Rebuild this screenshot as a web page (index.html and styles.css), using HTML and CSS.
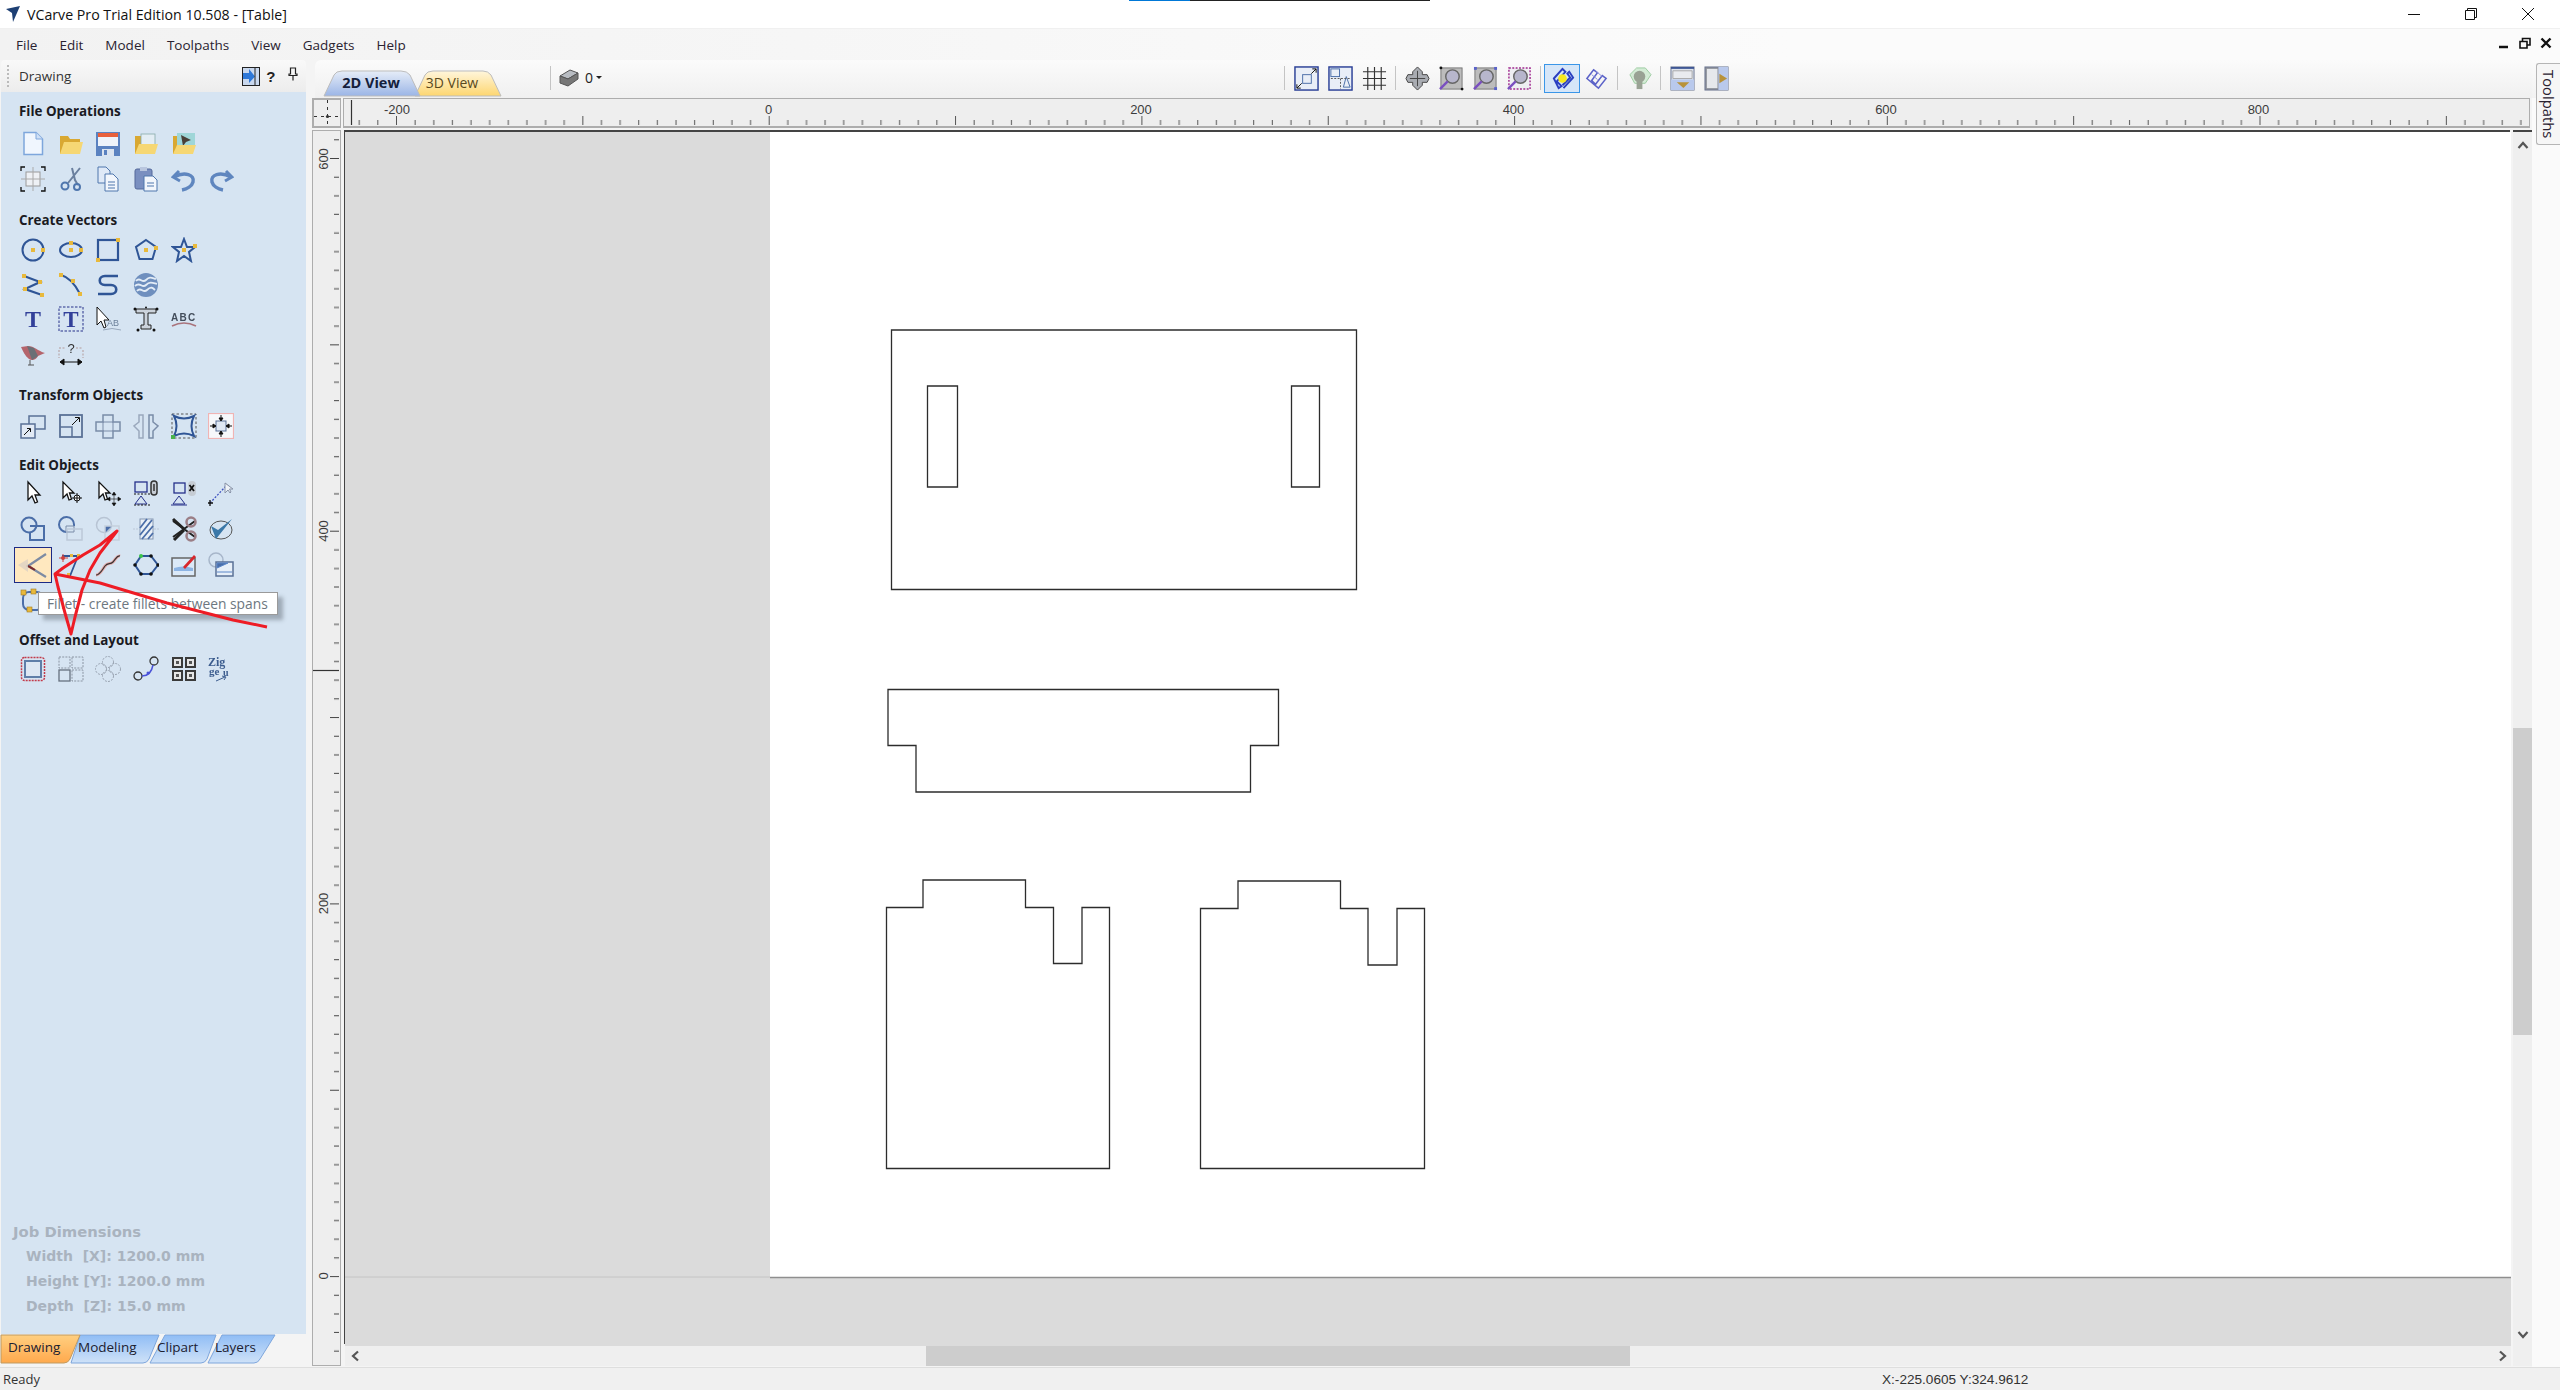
FILE: index.html
```html
<!DOCTYPE html>
<html>
<head>
    <title>VCarve Pro Trial Edition 10.508 - [Table]</title>
    <link rel="stylesheet" href="styles.css">
</head>
<body>
    <div class="capture-bar"><span class="capture-blue"></span><span class="capture-dark"></span></div>

    <div class="titlebar">
        <svg class="app-icon" width="16" height="18" viewBox="0 0 16 18"><path d="M1 4L15 1L8 17L7 8z" fill="#1d3f73"/></svg>
        <span class="title-text">VCarve Pro Trial Edition 10.508 - [Table]</span>
        <div class="win-buttons">
            <svg width="14" height="14" viewBox="0 0 14 14"><path d="M1 7.5H13" stroke="#111" fill="none"/></svg>
            <svg width="14" height="14" viewBox="0 0 14 14"><path d="M1.5 3.5H10.5V12.5H1.5zM3.5 3.5V1.5H12.5V10.5H10.5" stroke="#111" fill="none"/></svg>
            <svg width="14" height="14" viewBox="0 0 14 14"><path d="M1 1L13 13M13 1L1 13" stroke="#111" fill="none"/></svg>
        </div>
    </div>

    <div class="menubar">
        <nav class="menu">
            <span>File</span><span>Edit</span><span>Model</span><span>Toolpaths</span><span>View</span><span>Gadgets</span><span>Help</span>
        </nav>
        <div class="mdi-buttons">
            <svg width="12" height="12" viewBox="0 0 12 12"><path d="M1 10H10" stroke="#111" stroke-width="2.5"/></svg>
            <svg width="12" height="12" viewBox="0 0 12 12"><path d="M1 4.5H8V11H1zM3.5 4V1.5H11V8H8.5" stroke="#111" stroke-width="1.6" fill="none"/></svg>
            <svg width="12" height="12" viewBox="0 0 12 12"><path d="M1.5 1.5L10.5 10.5M10.5 1.5L1.5 10.5" stroke="#111" stroke-width="2.4"/></svg>
        </div>
    </div>

    <div class="workspace">
        <aside class="side">
            <div class="side-header">
                <span class="grip"></span>
                <span class="side-title">Drawing</span>
                <svg class="side-btn" width="18" height="19" viewBox="0 0 18 19"><rect x=".5" y=".5" width="17" height="18" fill="#c9d8ee" stroke="#222"/><path d="M1 6H7V2L13 9.5L7 16V12H1z" fill="#2e78d8"/><path d="M13 1V18" stroke="#222"/></svg>
                <span class="side-help">?</span>
                <svg class="side-pin" width="10" height="14" viewBox="0 0 10 14"><path d="M2.5 1H7.5V7H9V8.5H1V7H2.5zM5 8.5V13.5" stroke="#222" stroke-width="1.2" fill="none"/></svg>
            </div>

            <div class="side-body">
                <section class="group group-file">
                    <h3>File Operations</h3>
                    <div class="tools">
                        <svg viewBox="0 0 26 26"><path d="M4 1.5H16L22.500 8V23.500H4z" fill="#f0f6fe" stroke="#7ea6dc" stroke-width="1.500"/><path d="M16 1.500V8H22.500" fill="#cfe0f6" stroke="#7ea6dc"/></svg>
                        <svg viewBox="0 0 26 26"><path d="M2 23V5H10L12 8H22V23z" fill="#d9a832"/><path d="M2 23L6 11H25L22 23z" fill="#f6d774"/></svg>
                        <svg viewBox="0 0 26 26"><rect x="1" y="1" width="24" height="24" fill="#5b82c0"/><rect x="3" y="2" width="20" height="4" fill="#e8603c"/><rect x="3" y="6" width="20" height="9" fill="#eef3fa"/><rect x="7" y="18" width="12" height="7" fill="#dbe4f0"/><rect x="9" y="19" width="3" height="5" fill="#5b82c0"/></svg>
                        <svg viewBox="0 0 26 26"><path d="M2 23V5H10L12 7H22V23z" fill="#d9a832"/><rect x="8" y="3" width="14" height="11" fill="#e3edf4" stroke="#8aa" stroke-width=".8"/><path d="M2 23L6 13H25L22 23z" fill="#f6d774"/></svg>
                        <svg viewBox="0 0 26 26"><path d="M2 23V5H10L12 7H22V23z" fill="#d9a832"/><rect x="6" y="2" width="18" height="12" fill="#9fd6d8"/><path d="M10 4L20 9L15 11L12 15z" fill="#4a4038"/><path d="M2 23L6 14H25L22 23z" fill="#f6d774"/></svg>
                        <span></span>

                        <svg viewBox="0 0 26 26"><rect x="6" y="6" width="14" height="14" fill="#eef1f5" stroke="#999"/><path d="M13 1V25M1 13H25" stroke="#aaa"/><path d="M1 5V1H5M21 1H25V5M25 21V25H21M5 25H1V21" stroke="#111" fill="none" stroke-width="1.300"/></svg>
                        <svg viewBox="0 0 26 26"><path d="M22 2L10 17M14 2L17 14L20 19" stroke="#6a7f9e" stroke-width="2" fill="none"/><circle cx="7" cy="20" r="3.500" fill="none" stroke="#4f76ad" stroke-width="2"/><circle cx="19" cy="21" r="3" fill="none" stroke="#4f76ad" stroke-width="2"/></svg>
                        <svg viewBox="0 0 26 26"><path d="M3 1H11L15 5V17H3z" fill="#dfe9f7" stroke="#4f76ad"/><path d="M10 8H18L23 13V25H10z" fill="#f2f6fc" stroke="#4f76ad"/><path d="M13 16H20M13 19H20M13 22H20" stroke="#4f76ad"/></svg>
                        <svg viewBox="0 0 26 26"><rect x="2" y="3" width="17" height="20" rx="2" fill="#7a8fc0" stroke="#55689a"/><rect x="7" y="1" width="7" height="4" fill="#b9c6de"/><path d="M11 10H20L24 14V25H11z" fill="#f2f6fc" stroke="#4f76ad"/><path d="M14 17H21M14 20H21" stroke="#4f76ad"/></svg>
                        <svg viewBox="0 0 26 26"><path d="M8 5L2 11L9 15" fill="none" stroke="#5f86bf" stroke-width="3"/><path d="M3 11C14 5 24 9 22 16C21 20 16 23 11 24" fill="none" stroke="#5f86bf" stroke-width="3.500"/></svg>
                        <svg viewBox="0 0 26 26"><path d="M18 5L24 11L17 15" fill="none" stroke="#5f86bf" stroke-width="3"/><path d="M23 11C12 5 2 9 4 16C5 20 10 23 15 24" fill="none" stroke="#5f86bf" stroke-width="3.500"/></svg>
                    </div>
                </section>

                <section class="group group-vectors">
                    <h3>Create Vectors</h3>
                    <div class="tools tight">
                        <svg viewBox="0 0 26 26"><circle cx="13" cy="13" r="10.500" fill="none" stroke="#2f5596" stroke-width="2"/><rect x="11" y="11" width="4" height="4" fill="#e8b93c"/><rect x="21" y="11" width="4" height="4" fill="#e8b93c"/></svg>
                        <svg viewBox="0 0 26 26"><ellipse cx="13" cy="13" rx="11" ry="7" fill="none" stroke="#2f5596" stroke-width="2"/><rect x="11" y="4" width="4" height="4" fill="#e8b93c"/><rect x="11" y="11" width="4" height="4" fill="#e8b93c"/><rect x="21" y="11" width="4" height="4" fill="#e8b93c"/></svg>
                        <svg viewBox="0 0 26 26"><rect x="3" y="3" width="20" height="20" fill="none" stroke="#2f5596" stroke-width="2.200"/><rect x="21" y="1" width="4" height="4" fill="#e8b93c"/><rect x="1" y="21" width="4" height="4" fill="#e8b93c"/></svg>
                        <svg viewBox="0 0 26 26"><path d="M13 3L23 10L19.500 22H6.500L3 10z" fill="none" stroke="#2f5596" stroke-width="2"/><rect x="11" y="11" width="4" height="4" fill="#e8b93c"/><rect x="21" y="9" width="4" height="4" fill="#e8b93c"/></svg>
                        <svg viewBox="0 0 26 26"><path d="M13 2L16 10H24L18 15L20 24L13 19L6 24L8 15L2 10H10z" fill="none" stroke="#2f5596" stroke-width="2"/><rect x="11" y="11" width="4" height="4" fill="#e8b93c"/><rect x="22" y="7" width="4" height="4" fill="#e8b93c"/></svg>
                        <span></span>

                        <svg viewBox="0 0 26 26"><path d="M4 4L20 10L5 17L22 23" fill="none" stroke="#2f5596" stroke-width="2.200"/><rect x="2" y="2" width="4" height="4" fill="#e8b93c"/><rect x="18" y="8" width="4" height="4" fill="#e8b93c"/><rect x="3" y="15" width="4" height="4" fill="#e8b93c"/><rect x="20" y="21" width="4" height="4" fill="#e8b93c"/></svg>
                        <svg viewBox="0 0 26 26"><path d="M3 3Q14 6 22 22" fill="none" stroke="#2f5596" stroke-width="2"/><rect x="1" y="1" width="4" height="4" fill="#e8b93c"/><rect x="13" y="7" width="4" height="4" fill="#e8b93c"/><rect x="20" y="20" width="4" height="4" fill="#e8b93c"/></svg>
                        <svg viewBox="0 0 26 26"><path d="M23 4H10C3 4 3 13 10 13H16C23 13 23 22 16 22H3" fill="none" stroke="#2f5596" stroke-width="2.600"/></svg>
                        <svg viewBox="0 0 26 26"><circle cx="13" cy="13" r="12" fill="#6f8fbe"/><path d="M3 9C7 4 9 12 13 8S19 6 23 7M2 14C7 9 9 17 13 13S20 11 24 12M4 19C8 14 10 22 14 18S20 16 22 18" fill="none" stroke="#e3ecf6" stroke-width="1.800"/></svg>
                        <span></span>
                        <span></span>

                        <svg viewBox="0 0 26 26"><text x="13" y="21" class="ic-serif" fill="#32409a" font-size="24" text-anchor="middle">T</text></svg>
                        <svg viewBox="0 0 26 26"><rect x="1" y="1" width="24" height="24" fill="none" stroke="#26308a" stroke-dasharray="2.500 1.500"/><text x="13" y="21" class="ic-serif" fill="#32409a" font-size="23" text-anchor="middle">T</text></svg>
                        <svg viewBox="0 0 26 26"><path d="M2 1V19L6 15L9 22L11 21L9 14H14z" fill="#fff" stroke="#111"/><text x="12" y="20" class="ic-small" fill="#6b7f99" font-size="9">AB</text><path d="M8 24Q17 21 26 24" stroke="#98a8bd" fill="none"/></svg>
                        <svg viewBox="0 0 26 26"><path d="M3 3H23V7H15V19H18V23H8V19H11V7H3z" fill="#ccd3dc" stroke="#222"/><g fill="#111"><circle cx="2" cy="3" r="1.500"/><circle cx="24" cy="3" r="1.500"/><circle cx="5" cy="24" r="1.500"/><circle cx="21" cy="24" r="1.500"/><circle cx="13" cy="1.500" r="1"/></g></svg>
                        <svg viewBox="0 0 26 26"><text x="0" y="15" class="ic-small" fill="#444e5c" font-size="10" font-weight="bold" letter-spacing="1.300">ABC</text><path d="M1 20Q13 14 25 20" stroke="#a9737c" stroke-width="1.500" fill="none"/></svg>
                        <span></span>

                        <svg viewBox="0 0 26 26"><path d="M1 6L8 5C14 5 18 10 25 12L18 15C16 19 12 20 9 18C5 15 3 10 1 6z" fill="#b4646c"/><path d="M7 5L14 7L18 15L12 19z" fill="#6b6f76"/><path d="M10 19V24M8 24H14" stroke="#555"/></svg>
                        <svg viewBox="0 0 26 26"><text x="13" y="12" class="ic-small" fill="#333" font-size="13" text-anchor="middle">?</text><path d="M1 9V17M25 9V17M1 7H8M18 7H25" stroke="#b39a9a" stroke-dasharray="2 1.500" fill="none"/><path d="M2 21H24M2 21L6 18V24zM24 21L20 18V24z" stroke="#111" fill="#111"/></svg>
                    </div>
                </section>

                <section class="group group-transform">
                    <h3>Transform Objects</h3>
                    <div class="tools">
                        <svg viewBox="0 0 26 26"><path d="M9 3H25V16H9z" fill="none" stroke="#5a7096" stroke-width="1.500"/><rect x="1" y="11" width="14" height="14" fill="#e2eaf5" stroke="#5a7096" stroke-width="1.500"/><path d="M4 22L10 16M7 15.500H10.500V19" stroke="#111" fill="none"/></svg>
                        <svg viewBox="0 0 26 26"><rect x="2" y="2" width="22" height="22" fill="none" stroke="#5a7096" stroke-width="1.800"/><path d="M2 14H14V24" stroke="#5a7096" fill="none" stroke-width="1.500"/><path d="M14 12L21 5M17 4.500H21.500V9" stroke="#111" fill="none"/></svg>
                        <svg viewBox="0 0 26 26"><path d="M8 2H18V9H25V18H18V25H8V18H1V9H8z" fill="none" stroke="#7a8ca8" stroke-width="1.500"/><path d="M8 9H18V18H8z" fill="none" stroke="#7a8ca8"/></svg>
                        <svg viewBox="0 0 26 26"><path d="M10 2H6V9L1 13L6 18V25H10z" fill="none" stroke="#9aa8bd" stroke-width="1.500"/><path d="M16 2H20V9L25 13L20 18V25H16z" fill="none" stroke="#7a8ca8" stroke-width="1.500"/></svg>
                        <svg viewBox="0 0 26 26"><rect x="1" y="1" width="24" height="24" fill="none" stroke="#555" stroke-dasharray="2.500 2"/><path d="M3 3Q13 8 23 3Q18 13 23 23Q13 18 3 23Q8 13 3 3z" fill="none" stroke="#2f5596" stroke-width="2"/><rect x="0" y="22" width="4" height="4" fill="#49b24a"/></svg>
                        <svg viewBox="0 0 26 26"><rect x=".5" y=".5" width="25" height="25" fill="#f6f8fb" stroke="#f0b4b4" stroke-width="1.200"/><rect x="8" y="8" width="10" height="10" fill="#dfe8f4" stroke="#5a7096"/><path d="M13 2V7M13 24V19M2 13H7M24 13H19M11 5L13 8L15 5zM11 21L13 18L15 21zM5 11L8 13L5 15zM21 11L18 13L21 15z" stroke="#111" fill="#111"/></svg>
                    </div>
                </section>

                <section class="group group-edit">
                    <h3>Edit Objects</h3>
                    <div class="tools wide">
                        <svg viewBox="0 0 26 26"><path d="M8 2V20L12 16L15 23L17.500 22L15 15H20z" fill="#fff" stroke="#111" stroke-width="1.300"/></svg>
                        <svg viewBox="0 0 26 26"><path d="M5 2V18L9 14L11 20L13.500 19L11.500 13H16z" fill="#fff" stroke="#111" stroke-width="1.300"/><circle cx="19" cy="18" r="3" fill="#fff" stroke="#111"/><path d="M19 13V23M14 18H24" stroke="#111"/></svg>
                        <svg viewBox="0 0 26 26"><path d="M4 2V18L8 14L10 20L12.500 19L10.500 13H15z" fill="#fff" stroke="#111" stroke-width="1.300"/><path d="M19 13V25M13 19H25M17 15L19 12L21 15zM17 23L19 26L21 23zM15 17L12 19L15 21zM23 17L26 19L23 21z" stroke="#111" fill="#111" stroke-width=".6"/></svg>
                        <svg viewBox="0 0 26 26"><rect x="2" y="2" width="12" height="10" fill="none" stroke="#26308a" stroke-width="1.300"/><path d="M2 24L8 16L14 24z" fill="none" stroke="#26308a"/><path d="M1 14H17M1 25H17" stroke="#111" stroke-dasharray="2 1.500"/><rect x="18" y="1" width="6" height="14" rx="3" fill="#c6ccd4" stroke="#333" stroke-width="1.500"/><path d="M21 4V11" stroke="#333" stroke-width="1.500"/></svg>
                        <svg viewBox="0 0 26 26"><rect x="3" y="3" width="11" height="10" fill="none" stroke="#26308a" stroke-width="1.300"/><path d="M2 24L8 16L14 24zM0 25H16" fill="none" stroke="#26308a"/><rect x="17" y="1" width="8" height="15" rx="4" fill="#c6ccd4"/><path d="M18.500 5L23 11M23 5L18.500 11" stroke="#111" stroke-width="1.800"/></svg>
                        <svg viewBox="0 0 26 26"><path d="M2 23L18 6" stroke="#3f52c0" stroke-dasharray="2 1.500" stroke-width="1.300"/><path d="M2 20V26M0 23H5" stroke="#111" stroke-width="1.300"/><path d="M17 3L24 9" stroke="#888"/><path d="M17 3V13L20 10L22 13L23 12L21.500 9H25z" fill="#eef2f8" stroke="#8893a8"/></svg>

                        <svg viewBox="0 0 26 26"><circle cx="9" cy="9" r="7.500" fill="none" stroke="#4b6ea8" stroke-width="2"/><path d="M10 10H24V24H10V16" fill="none" stroke="#4b6ea8" stroke-width="2"/></svg>
                        <svg viewBox="0 0 26 26"><path d="M10 16H9A7.500 7.500 0 1 1 16 9V10" fill="none" stroke="#4b6ea8" stroke-width="2"/><path d="M8 10H16V16H8z" fill="none" stroke="#7a8ca8"/><rect x="9" y="13" width="15" height="11" fill="none" stroke="#bcc8d8" stroke-width="1.500"/></svg>
                        <svg viewBox="0 0 26 26"><circle cx="9" cy="9" r="7.500" fill="none" stroke="#b8c4d4" stroke-width="1.500"/><path d="M10 10H17L10 17z" fill="#4b6ea8"/><rect x="10" y="10" width="14" height="14" fill="none" stroke="#c5d0dd" stroke-width="1.500"/></svg>
                        <svg viewBox="0 0 26 26"><rect x="7" y="3" width="13" height="20" fill="#eaf0f7" stroke="#8597b2"/><path d="M7 12L14 3M7 19L19 4M9 23L20 10M15 23L20 17" stroke="#4b6ea8" stroke-width="1.800"/><path d="M0 13H6M21 13H26" stroke="#bcc8d8" stroke-dasharray="2 1"/></svg>
                        <svg viewBox="0 0 26 26"><path d="M2 5L24 21M24 5L2 21" stroke="#222" stroke-width="2"/><path d="M2 3L13 13M3 24L13 14" stroke="#222" stroke-width="3"/><circle cx="20" cy="6" r="4.500" fill="none" stroke="#9b7e86" stroke-width="2.500"/><circle cx="20" cy="20" r="4.500" fill="none" stroke="#9b7e86" stroke-width="2.500"/></svg>
                        <svg viewBox="0 0 26 26"><ellipse cx="13" cy="14" rx="11" ry="9" fill="none" stroke="#555"/><path d="M3 10L8 23L24 3L10 14z" fill="#3b78a8"/></svg>

                        <svg class="tool-active" viewBox="0 0 36 34"><path d="M31 6L13 18L31 29" fill="none" stroke="#7d8ba3" stroke-width="2.200"/><path d="M13 18Q15 19 20 22" fill="none" stroke="#7d2a2a" stroke-width="2"/><path d="M3 17L13 11V24z" fill="#d8cfc4" opacity=".7"/></svg>
                        <svg viewBox="0 0 26 26"><path d="M4 4H20L12 24" fill="none" stroke="#2f5596" stroke-width="1.800"/><path d="M1 6H10M5 2V10" stroke="#d0403c"/><circle cx="5" cy="6" r="2" fill="#d0403c"/><rect x="12" y="2" width="3" height="3" fill="#e8b93c"/><rect x="19" y="2" width="3" height="3" fill="#e8b93c"/><rect x="9" y="21" width="3" height="3" fill="#e8b93c"/></svg>
                        <svg viewBox="0 0 26 26"><path d="M1 23C5 23 7 18 10 14S15 13 18 10S22 3 25 4" fill="none" stroke="#e7a8a8" stroke-width="3"/><path d="M1 23C5 23 7 18 10 14S15 13 18 10S22 3 25 4" fill="none" stroke="#333" stroke-width="1.200"/></svg>
                        <svg viewBox="0 0 26 26"><path d="M2 13L8 4H18L25 13L18 22H8z" fill="none" stroke="#2f5596" stroke-width="2"/><g fill="#111"><circle cx="18" cy="4" r="1.800"/><circle cx="25" cy="13" r="1.800"/><circle cx="18" cy="22" r="1.800"/><circle cx="8" cy="22" r="1.800"/><circle cx="2" cy="13" r="1.800"/></g><circle cx="8" cy="4" r="2" fill="#3ac44a"/></svg>
                        <svg viewBox="0 0 26 26"><rect x="1" y="6" width="23" height="18" fill="#dbe9f8" stroke="#666" stroke-width="1.500"/><path d="M3 16Q12 13 22 16V19H3z" fill="#8db4e4"/><path d="M12 15L23 3L25 5L14 17z" fill="#d8262c"/></svg>
                        <svg viewBox="0 0 26 26"><circle cx="8" cy="8" r="7" fill="none" stroke="#a7b6ca" stroke-width="1.500"/><rect x="8" y="10" width="17" height="14" fill="#e7eff8" stroke="#5a7096" stroke-width="1.500"/><path d="M9 11H20L9 16zM9 20H24" stroke="#5a86c8" fill="#4b6ea8"/></svg>

                        <svg viewBox="0 0 26 26"><rect x="3" y="4" width="20" height="18" rx="6" fill="none" stroke="#4b6ea8" stroke-width="2"/><rect x="1" y="2" width="5" height="5" fill="#e8b93c" stroke="#a07a20" stroke-width=".6"/><rect x="11" y="1" width="5" height="5" fill="#e8b93c" stroke="#a07a20" stroke-width=".6"/><rect x="7" y="19" width="5" height="5" fill="#e8b93c" stroke="#a07a20" stroke-width=".6"/></svg>
                        <svg viewBox="0 0 26 26"><path d="M4 6L22 12" stroke="#8a97a8"/></svg>
                        <svg viewBox="0 0 26 26"><path d="M4 6L22 12" stroke="#8a97a8"/></svg>
                        <svg viewBox="0 0 26 26"><path d="M4 6L22 12" stroke="#8a97a8"/></svg>
                    </div>
                </section>

                <section class="group group-offset">
                    <h3>Offset and Layout</h3>
                    <div class="tools">
                        <svg viewBox="0 0 26 26"><rect x="1.500" y="1.500" width="23" height="23" rx="3" fill="none" stroke="#c23a4a" stroke-width="1.500" stroke-dasharray="2 1"/><rect x="5" y="5" width="16" height="16" fill="#dde7f3" stroke="#5f7ea8" stroke-width="2"/></svg>
                        <svg viewBox="0 0 26 26"><g fill="none" stroke="#8a94a2" stroke-dasharray="2 1.200"><rect x="1" y="1" width="11" height="11"/><rect x="14" y="1" width="11" height="11"/><rect x="14" y="14" width="11" height="11"/></g><rect x="1" y="14" width="11" height="11" fill="none" stroke="#66707e" stroke-width="1.300"/></svg>
                        <svg viewBox="0 0 26 26"><g fill="none" stroke="#98a2b0" stroke-dasharray="2 1.200"><circle cx="13" cy="6" r="5.500"/><circle cx="6" cy="13" r="5.500"/><circle cx="20" cy="13" r="5.500"/><circle cx="13" cy="20" r="5.500"/></g></svg>
                        <svg viewBox="0 0 26 26"><circle cx="5" cy="20" r="4" fill="none" stroke="#333" stroke-width="1.300"/><circle cx="21" cy="5" r="4" fill="none" stroke="#333" stroke-width="1.300"/><path d="M9 20Q18 20 20 9" fill="none" stroke="#4a52d8" stroke-width="1.500"/><circle cx="15" cy="17" r="1.500" fill="#4a52d8"/></svg>
                        <svg viewBox="0 0 26 26"><g fill="#3a3a3a"><rect x="1" y="1" width="11" height="11"/><rect x="14" y="1" width="11" height="11"/><rect x="1" y="14" width="11" height="11"/><rect x="14" y="14" width="11" height="11"/></g><g fill="#e6e6e6"><rect x="3" y="3" width="7" height="7"/><rect x="16" y="3" width="7" height="7"/><rect x="3" y="16" width="7" height="7"/><rect x="16" y="16" width="7" height="7"/></g><g fill="#555"><rect x="5" y="5" width="3" height="3"/><rect x="18" y="5" width="3" height="3"/><rect x="5" y="18" width="3" height="3"/><rect x="18" y="18" width="3" height="3"/></g></svg>
                        <svg viewBox="0 0 26 26"><text x="0" y="10" class="ic-serif" fill="#3c5c8e" font-size="12">Zig</text><text x="1" y="19" class="ic-serif" fill="#3c5c8e" font-size="11">ge</text><text x="15" y="20" class="ic-serif" fill="#3c5c8e" font-size="10">u</text><path d="M8 25L17 21M14 20L18 21L16 24" stroke="#3c5c8e" fill="none"/></svg>
                    </div>
                </section>

                <div class="job-info">
                    <div class="job-title">Job Dimensions</div>
                    <div class="job-line">Width  [X]: 1200.0 mm</div>
                    <div class="job-line">Height [Y]: 1200.0 mm</div>
                    <div class="job-line">Depth  [Z]: 15.0 mm</div>
                </div>
            </div>

            <svg class="side-tabs" width="290" height="33" viewBox="0 0 290 33">
                <defs>
                    <linearGradient id="tabOrange" x1="0" y1="0" x2="0" y2="1"><stop offset="0" stop-color="#ffcf80"/><stop offset="1" stop-color="#ffa94d"/></linearGradient>
                    <linearGradient id="tabBlue" x1="0" y1="0" x2="0" y2="1"><stop offset="0" stop-color="#90bdf5"/><stop offset="1" stop-color="#cfe2f8"/></linearGradient>
                </defs>
                <path d="M208 29H254Q258 29 260 25L275 1H222z" fill="url(#tabBlue)" stroke="#7ea6dc"/>
                <path d="M150 29H201Q205 29 207 25L216 1H165z" fill="url(#tabBlue)" stroke="#7ea6dc"/>
                <path d="M71 29H143Q147 29 149 25L159 1H80z" fill="url(#tabBlue)" stroke="#7ea6dc"/>
                <path d="M1 29H64Q68 29 70 25L80 1H1z" fill="url(#tabOrange)" stroke="#c09a60"/>
                <g class="side-tab-text">
                    <text x="8" y="18">Drawing</text>
                    <text x="78" y="18">Modeling</text>
                    <text x="157" y="18">Clipart</text>
                    <text x="215" y="18">Layers</text>
                </g>
            </svg>

            <!-- tooltip and the red scribble lie over the tool icons -->
            <div class="tooltip">Fillet - create fillets between spans</div>
            <svg class="scribble" width="290" height="120" viewBox="0 525 290 120">
                <path d="M267 627L233 620L167 603L100 583L55 574L63 568L83 555L100 545L117 531L100 553L90 570L82 590L75 617L71 634L65 613L58 587L55 574" fill="none" stroke="#ee1c25" stroke-width="3" stroke-linejoin="round"/>
            </svg>
        </aside>

        <main class="main">
            <div class="toolbar">
                <svg class="view-tabs" width="180" height="27" viewBox="0 0 180 27">
                    <defs>
                        <linearGradient id="tab3d" x1="0" y1="0" x2="0" y2="1"><stop offset="0" stop-color="#fff6dc"/><stop offset="1" stop-color="#fdd670"/></linearGradient>
                        <linearGradient id="tab2d" x1="0" y1="0" x2="0" y2="1"><stop offset="0" stop-color="#e6edf8"/><stop offset="1" stop-color="#9bb5e6"/></linearGradient>
                    </defs>
                    <path d="M92 26L102 5Q104 1 110 1H160Q165 1 168 5L178 26z" fill="url(#tab3d)" stroke="#bdbdbd"/>
                    <path d="M1 26L11 5Q13 1 19 1H78Q84 1 87 5L97 26z" fill="url(#tab2d)" stroke="#bdbdbd"/>
                    <text x="48" y="18" class="tab-label-on" text-anchor="middle">2D View</text>
                    <text x="129" y="18" class="tab-label-off" text-anchor="middle">3D View</text>
                </svg>
                <span class="tb-sep sep-layer"></span>
                <svg class="layer-icon" width="20" height="18" viewBox="0 0 20 18"><path d="M1 7L11 1L19 4L9 10z" fill="#b8bcc2" stroke="#555"/><path d="M1 7V14L9 17L19 10V4L9 10z" fill="#777" stroke="#555"/></svg>
                <span class="layer-num">0</span>
                <span class="caret"></span>

                <div class="view-tools">
                    <span class="tb-sep"></span>
                    <svg viewBox="0 0 26 26"><rect x="1" y="1" width="24" height="24" fill="#e9eef7" stroke="#2a3f96" stroke-width="1.500"/><rect x="9" y="9" width="9" height="9" fill="none" stroke="#4b6ea8"/><path d="M3 23L8 18M18 8L23 3M3 19V23H7M19 3H23V7" stroke="#111" fill="none"/></svg>
                    <svg viewBox="0 0 26 26"><rect x="1" y="1" width="24" height="24" fill="#e9eef7" stroke="#2a3f96" stroke-width="1.500"/><rect x="3" y="3" width="9" height="8" fill="none" stroke="#4b6ea8"/><path d="M16 22L19 11L23 22z" fill="none" stroke="#4b6ea8"/><path d="M3 13H23M13 13V24" stroke="#555" stroke-dasharray="2 1.500"/></svg>
                    <svg viewBox="0 0 26 26"><path d="M1 6H25M1 13H25M1 20H25M6 1V25M13 1V25M20 1V25" stroke="#333" stroke-width="1.200"/></svg>
                    <span class="tb-sep"></span>
                    <svg viewBox="0 0 26 26"><path d="M13 1L18 6V9H23L25 13L23 17H18V20L13 25L8 20V17H3L1 13L3 9H8V6z" fill="#a9acb2" stroke="#444"/><path d="M13 5V21M5 13H21" stroke="#444"/></svg>
                    <svg viewBox="0 0 26 26"><rect x="2" y="2" width="22" height="22" fill="#bcbcbc" stroke="#777"/><circle cx="14" cy="11" r="7" fill="#b7b6cc" stroke="#666" stroke-width="1.500"/><path d="M9 16L1 24" stroke="#7a4fc0" stroke-width="2.500"/><circle cx="2" cy="2" r="1.500" fill="#111"/><circle cx="24" cy="24" r="1.500" fill="#111"/></svg>
                    <svg viewBox="0 0 26 26"><rect x="2" y="2" width="22" height="22" fill="#bcbcbc" stroke="#777"/><circle cx="14" cy="11" r="7" fill="#b7b6cc" stroke="#666" stroke-width="1.500"/><path d="M9 16L1 24" stroke="#7a4fc0" stroke-width="2.500"/><g fill="#5a62c8"><rect x="1" y="1" width="3" height="3"/><rect x="22" y="1" width="3" height="3"/><rect x="22" y="22" width="3" height="3"/></g></svg>
                    <svg viewBox="0 0 26 26"><rect x="2" y="2" width="22" height="22" fill="#eeeef2" stroke="#a02a90" stroke-width="1.500" stroke-dasharray="2 1.500"/><circle cx="14" cy="11" r="7" fill="#b7b6cc" stroke="#666" stroke-width="1.500"/><path d="M9 16L1 24" stroke="#7a4fc0" stroke-width="2.500"/></svg>
                    <span class="tb-sep"></span>
                    <span class="tb-on"><svg viewBox="0 0 26 26"><path d="M4 13L13 3L16 6L7 16L12 21L9 23z" fill="none" stroke="#2a3fc0" stroke-width="2"/><path d="M14 23L24 12L20 6L18 8L21 12L13 20" fill="none" stroke="#2a3fc0" stroke-width="2"/><circle cx="13" cy="13" r="4.500" fill="#f6e820"/></svg></span>
                    <svg viewBox="0 0 26 26"><path d="M3 13L10 4L14 7L8 15L12 19L19 10L23 13L15 23L3 13z" fill="none" stroke="#5b62c8" stroke-width="1.600"/><path d="M8 9L14 14M12 5L19 11" stroke="#8d92dc"/></svg>
                    <span class="tb-sep"></span>
                    <svg viewBox="0 0 26 26"><path d="M3 9L10 2H19L25 9L19 18H8z" fill="#d4ecd6" stroke="#9ccba0"/><circle cx="13" cy="11" r="6" fill="#99a294"/><rect x="10" y="15" width="6" height="9" fill="#99a294"/></svg>
                    <span class="tb-sep"></span>
                    <svg viewBox="0 0 26 26"><rect x="1" y="1" width="24" height="24" fill="#dde3ec" stroke="#6a7590"/><rect x="1" y="1" width="24" height="2" fill="#3f5794"/><path d="M3 5H23V13H3z" fill="#e9ebef" stroke="#aaa"/><rect x="1" y="14" width="24" height="11" fill="#b9c9ec"/><path d="M7 17H20L14 23z" fill="#b8923a"/></svg>
                    <svg viewBox="0 0 26 26"><rect x="1" y="1" width="24" height="24" fill="#8e919a" stroke="#6a7590"/><rect x="3" y="3" width="11" height="20" fill="#e6e8ec"/><rect x="15" y="1" width="10" height="24" fill="#b9c9ec"/><path d="M24 13L16 8V18z" fill="#b8923a"/></svg>
                </div>
            </div>

            <div class="view-grid">
                <div class="ruler-corner">
                    <svg width="28" height="27" viewBox="0 0 28 27"><path d="M13.500 0V27M0 16.500H28" stroke="#333" stroke-dasharray="3 4"/><circle cx="13.500" cy="16.500" r="1.600" fill="#333"/></svg>
                </div>
                <div class="ruler-h">
                    <svg width="2187" height="27" viewBox="343 99 2187 27">
                        <defs>
                            <pattern id="tickH" x="767.7" y="99" width="186.35" height="27" patternUnits="userSpaceOnUse">
                                <path d="M.5 17V26" stroke="#555"/>
                                <path d="M19.1 21V26M37.8 21V26M56.400 21V26M75 21V26M93.700 21V26M112.300 21V26M130.900 21V26M149.600 21V26M168.200 21V26" stroke="#555"/>
                            </pattern>
                        </defs>
                        <rect x="354" y="99" width="2170" height="27" fill="url(#tickH)"/>
                        <path d="M350.500 100V125" stroke="#333" stroke-width="1.200"/>
                        <g class="ruler-label" text-anchor="middle">
                            <text x="396" y="114">-200</text>
                            <text x="767.500" y="114">0</text>
                            <text x="1140" y="114">200</text>
                            <text x="1512.500" y="114">400</text>
                            <text x="1885" y="114">600</text>
                            <text x="2257.500" y="114">800</text>
                        </g>
                    </svg>
                </div>
                <div class="ruler-v">
                    <svg width="27" height="1233" viewBox="313 131 27 1233">
                        <defs>
                            <pattern id="tickV" x="313" y="158" width="27" height="186.35" patternUnits="userSpaceOnUse">
                                <path d="M17 .5H26" stroke="#444"/>
                                <path d="M21 19.100H26M21 37.800H26M21 56.400H26M21 75H26M21 93.700H26M21 112.300H26M21 130.900H26M21 149.600H26M21 168.200H26" stroke="#444"/>
                            </pattern>
                        </defs>
                        <rect x="313" y="132" width="27" height="1230" fill="url(#tickV)"/>
                        <path d="M313 670.500H339" stroke="#333" stroke-width="1.200"/>
                        <g class="ruler-label" text-anchor="middle">
                            <text transform="translate(328 159) rotate(-90)">600</text>
                            <text transform="translate(328 531) rotate(-90)">400</text>
                            <text transform="translate(328 903.500) rotate(-90)">200</text>
                            <text transform="translate(328 1276) rotate(-90)">0</text>
                        </g>
                    </svg>
                </div>
                <div class="canvas-wrap">
                    <svg class="canvas" width="2166" height="1214" viewBox="345 132 2166 1214">
                        <rect x="345" y="132" width="425" height="1214" fill="#dbdbdb"/>
                        <rect x="770" y="1278" width="1741" height="68" fill="#dbdbdb"/>
                        <path d="M770 1277.500H2511" stroke="#8f8f8f" stroke-width="1.500"/>
                        <path d="M345 1277H770" stroke="#c4c4c4"/>
                        <g fill="none" stroke="#2c2c2c" stroke-width="1.300">
                            <path d="M891.500 330H1356.500V589.500H891.500z"/>
                            <path d="M927.500 386H957.500V487H927.500z"/>
                            <path d="M1291.500 386H1319.500V487H1291.500z"/>
                            <path d="M888 689.500H1278.500V745.500H1250.500V792H916V745.500H888z"/>
                            <path d="M886.500 907.500H923V880H1025.500V907.500H1053.500V963.500H1082V907.500H1109.500V1168.500H886.500z"/>
                            <path d="M1200.500 908.500H1238V881H1340.500V908.500H1368V965H1397V908.500H1424.500V1168.500H1200.500z"/>
                        </g>
                    </svg>
                    <div class="vscroll">
                        <svg width="12" height="10" viewBox="0 0 12 10"><path d="M1.500 8L6 3L10.500 8" fill="none" stroke="#555" stroke-width="2.200"/></svg>
                        <div class="vthumb"></div>
                        <svg class="arrow-end" width="12" height="10" viewBox="0 0 12 10"><path d="M1.500 2L6 7L10.500 2" fill="none" stroke="#555" stroke-width="2.200"/></svg>
                    </div>
                    <div class="hscroll">
                        <svg width="10" height="12" viewBox="0 0 10 12"><path d="M8 1.500L3 6L8 10.500" fill="none" stroke="#555" stroke-width="2.200"/></svg>
                        <div class="hthumb"></div>
                        <svg class="arrow-end" width="10" height="12" viewBox="0 0 10 12"><path d="M2 1.500L7 6L2 10.500" fill="none" stroke="#555" stroke-width="2.200"/></svg>
                    </div>
                </div>
            </div>
        </main>

        <div class="right-strip">
            <div class="toolpaths-tab">Toolpaths</div>
        </div>
    </div>

    <div class="statusbar">
        <span>Ready</span>
        <span class="coords">X:-225.0605 Y:324.9612</span>
    </div>
</body>
</html>
```

FILE: styles.css
```css
* {
    box-sizing: border-box;
}

body {
    margin: 0;
    width: 2560px;
    height: 1390px;
    overflow: hidden;
    display: flex;
    flex-direction: column;
    position: relative;
    background-color: #f4f4f4;
    font-family: "Open Sans", "Noto Sans", sans-serif;
    color: #222;
}

svg {
    display: block;
    flex: none;
}

/* top strip of the screen capture */
.capture-bar {
    position: absolute;
    top: 0;
    left: 1129px;
    display: flex;
    height: 1px;
}

.capture-blue {
    width: 61px;
    background-color: #0078d7;
}

.capture-dark {
    width: 240px;
    background-color: #222;
}

.titlebar {
    height: 29px;
    flex: none;
    display: flex;
    align-items: center;
    padding-left: 5px;
    background-color: #fff;
    border-bottom: 1px solid #f0f0f0;
}

.title-text {
    margin-left: 6px;
    font-size: 14.200px;
    color: #111;
}

.win-buttons {
    margin-left: auto;
    display: flex;
    gap: 43px;
    padding-right: 25px;
}

.menubar {
    height: 31px;
    flex: none;
    display: flex;
    align-items: center;
    justify-content: space-between;
    background: linear-gradient(90deg, #f2f2f2, #fbfbfb 70%);
}

.menu {
    display: flex;
    gap: 22px;
    padding-left: 16px;
    font-size: 13.500px;
    color: #2a2230;
}

.mdi-buttons {
    display: flex;
    gap: 9px;
    padding-right: 8px;
    margin-top: -4px;
}

.workspace {
    flex: 1;
    min-height: 0;
    display: flex;
}

/* left panel */
.side {
    width: 305px;
    margin-left: 1px;
    flex: none;
    display: flex;
    flex-direction: column;
    position: relative;
}

.side-header {
    height: 32px;
    flex: none;
    display: flex;
    align-items: center;
    background: linear-gradient(#f9f9f9, #ececec);
    border-radius: 4px 4px 0 0;
    padding-left: 6px;
}

.grip {
    width: 2px;
    height: 22px;
    background-image: linear-gradient(#bbb 50%, transparent 50%);
    background-size: 2px 4px;
}

.side-title {
    margin-left: 10px;
    font-size: 13.500px;
    color: #333;
}

.side-btn {
    margin-left: 171px;
}

.side-help {
    margin-left: 6px;
    font: bold 15px "Liberation Sans", sans-serif;
}

.side-pin {
    margin-left: 13px;
    margin-top: -4px;
}

.side-body {
    flex: 1;
    min-height: 0;
    display: flex;
    flex-direction: column;
    background-color: #d6e4f2;
    padding-top: 10px;
}

.group {
    padding-left: 13px;
}

.group h3 {
    margin: 0;
    padding-left: 5px;
    height: 18px;
    line-height: 18px;
    font-size: 13.400px;
    font-weight: 700;
    color: #1a1a22;
}

.tools {
    display: grid;
    grid-template-columns: repeat(6, 37.700px);
    grid-auto-rows: 35px;
    margin-top: 4px;
    justify-items: center;
    align-items: center;
}

.tools svg {
    width: 26px;
    height: 26px;
    filter: blur(.35px);
}

.tools.tight {
    grid-auto-rows: 34.500px;
}

.tools.wide {
    grid-auto-rows: 36px;
    margin-top: 1px;
}

.tools .tool-active {
    width: 36px;
    height: 34px;
    background-color: #ffe8bf;
    outline: 1.500px solid #1c2a85;
    filter: none;
}

.ic-serif {
    font-family: "Liberation Serif", serif;
    font-weight: 700;
}

.ic-small {
    font-family: "Liberation Sans", sans-serif;
}

.group-file .tools {
    margin-top: 6px;
}

.group-vectors {
    margin-top: 15px;
}

.group-transform {
    margin-top: 15px;
}

.group-edit {
    margin-top: 13px;
}

.group-offset {
    margin-top: 12px;
}

.group-offset .tools {
    margin-top: 2px;
}

.job-info {
    margin-top: auto;
    padding: 0 0 15px 12px;
    font-family: "DejaVu Sans", sans-serif;
    font-weight: 700;
    line-height: 25px;
    color: #a9b3bf;
}

.job-title {
    font-size: 14.800px;
}

.job-line {
    padding-left: 13px;
    font-size: 14px;
    white-space: pre;
}

.side-tabs {
    margin-left: -1px;
    height: 33px;
}

.side-tab-text {
    font-size: 13.500px;
    fill: #1c2030;
}

.tooltip {
    position: absolute;
    left: 37px;
    top: 532px;
    width: 240px;
    height: 23px;
    padding-left: 8px;
    background-color: #fff;
    border: 1px solid #9a9a9a;
    box-shadow: 5px 5px 4px rgba(90, 100, 110, 0.45);
    font-size: 13.800px;
    line-height: 21px;
    color: #6d7780;
    white-space: nowrap;
}

.scribble {
    position: absolute;
    left: -1px;
    top: 465px;
}

/* centre */
.main {
    flex: 1;
    min-width: 0;
    margin-left: 6px;
    display: flex;
    flex-direction: column;
}

.toolbar {
    height: 38px;
    flex: none;
    display: flex;
    align-items: flex-start;
    margin-left: 3px;
    background: linear-gradient(#fbfbfb, #f0f0f0);
    border-radius: 6px 0 0 0;
}

.view-tabs {
    margin: 10px 0 0 8px;
    height: 27px;
}

.tab-label-on {
    font-size: 14.500px;
    font-weight: 700;
    fill: #14203c;
}

.tab-label-off {
    font-size: 14px;
    fill: #5a4a20;
}

.tb-sep {
    width: 1px;
    height: 24px;
    background-color: #c4c4c4;
    margin-top: 6px;
}

.sep-layer {
    margin-left: 47px;
}

.layer-icon {
    margin: 9px 0 0 8px;
}

.layer-num {
    margin: 8px 0 0 6px;
    font-size: 14px;
}

.caret {
    width: 0;
    height: 0;
    margin: 16px 0 0 3px;
    border-left: 3px solid transparent;
    border-right: 3px solid transparent;
    border-top: 3px solid #222;
}

.view-tools {
    margin-left: 678px;
    display: flex;
    align-items: center;
    height: 36px;
    gap: 0;
}

.view-tools svg {
    width: 25px;
    height: 25px;
    margin: 0 4.500px;
    filter: blur(.3px);
}

.view-tools .tb-sep {
    margin: 0 4px;
}

.tb-on {
    padding: 1px 0;
    background-color: #d6e6f8;
    outline: 1px solid #3a96e8;
}

.view-grid {
    flex: 1;
    min-height: 0;
    display: grid;
    grid-template-columns: 31px 1fr;
    grid-template-rows: 32px 1fr;
}

.ruler-corner,
.ruler-h,
.ruler-v {
    background-color: #eee;
    border: 1px solid #adadad;
}

.ruler-corner {
    width: 29px;
    height: 30px;
    border-width: 2px 1px 2px 2px;
}

.ruler-h {
    width: 2187px;
    height: 30px;
    border-width: 1px 1px 2px 1px;
}

.ruler-v {
    width: 29px;
    margin-bottom: 1px;
}

.ruler-label {
    font: 13px "Liberation Sans", sans-serif;
    fill: #3c3c3c;
}

.canvas-wrap {
    display: grid;
    grid-template-columns: 2168px 21px;
    grid-template-rows: 1216px 20px;
}

.canvas {
    box-shadow: -1px -2px 0 #444;
    margin-left: 2px;
    margin-top: 2px;
    background-color: #fff;
}

.vscroll {
    grid-row: 1 / span 2;
    grid-column: 2;
    display: flex;
    flex-direction: column;
    align-items: center;
    padding: 8px 0 26px;
    background-color: #efefef;
    margin-left: 2px;
    border-top: 2px solid #444;
}

.vthumb {
    width: 100%;
    height: 307px;
    margin-top: 578px;
    background-color: #cdcdcd;
}

.hscroll {
    grid-row: 2;
    grid-column: 1;
    display: flex;
    align-items: center;
    padding: 0 3px 0 5px;
    margin-left: 2px;
    background-color: #efefef;
}

.hthumb {
    width: 704px;
    height: 100%;
    margin-left: 566px;
    background-color: #cdcdcd;
}

.arrow-end {
    margin-top: auto;
}

.hscroll .arrow-end {
    margin-top: 0;
    margin-left: auto;
}

.right-strip {
    width: 28px;
    flex: none;
    background: linear-gradient(#fbfbfb, #f2f2f2 38px, #fafafa 38px);
}

.toolpaths-tab {
    margin: 3px 0 0 4px;
    width: 24px;
    height: 82px;
    border: 1px solid #b5b5b5;
    border-right: 0;
    border-radius: 3px 0 0 3px;
    background-color: #f6f6f6;
    writing-mode: vertical-rl;
    font-size: 14.800px;
    line-height: 22px;
    padding-top: 6px;
    color: #2a2230;
}

.statusbar {
    height: 23px;
    flex: none;
    display: flex;
    align-items: center;
    padding-left: 3px;
    background-color: #f0f0f0;
    border-top: 1px solid #dedede;
    font-size: 13px;
    color: #333;
}

.coords {
    margin-left: 1842px;
    font-family: "Liberation Sans", sans-serif;
    font-size: 13.600px;
}
```
